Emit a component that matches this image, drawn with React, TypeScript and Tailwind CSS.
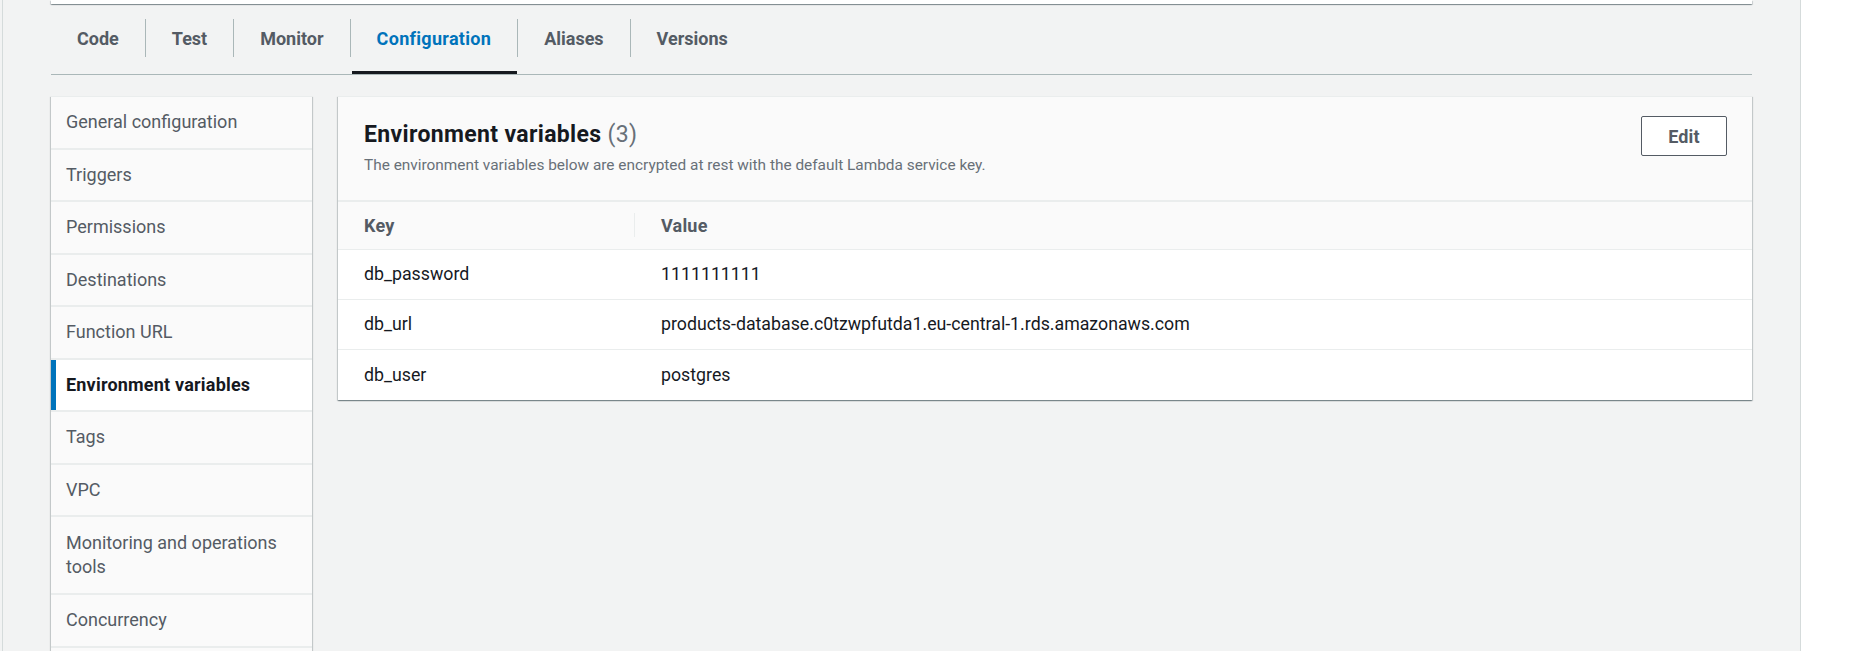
import React from 'react';

const tabs = ['Code', 'Test', 'Monitor', 'Configuration', 'Aliases', 'Versions'];

const navItems = [
  'General configuration',
  'Triggers',
  'Permissions',
  'Destinations',
  'Function URL',
  'Environment variables',
  'Tags',
  'VPC',
  'Monitoring and operations tools',
  'Concurrency',
];

const envVars = [
  { key: 'db_password', value: '1111111111' },
  { key: 'db_url', value: 'products-database.c0tzwpfutda1.eu-central-1.rds.amazonaws.com' },
  { key: 'db_user', value: 'postgres' },
];

const cardShadow =
  'shadow-[0_1px_1px_0_rgba(0,28,36,0.3),1px_1px_1px_0_rgba(0,28,36,0.15),-1px_1px_1px_0_rgba(0,28,36,0.15)]';

const Tabs: React.FC<{ active: string }> = ({ active }) => (
  <div className="flex border-b border-[#aab7b8]">
    {tabs.map((tab, index) => {
      const isActive = tab === active;
      return (
        <div key={tab} className="flex flex-col pt-[15px]">
          <div
            className={`h-[38px] flex items-center px-[26px] text-[18px] font-bold ${
              index > 0 ? 'border-l border-[#aab7b8]' : ''
            } ${isActive ? 'text-[#0073bb] tracking-[0.3px]' : 'text-[#545b64]'}`}
          >
            {tab}
          </div>
          <div className="h-[14px]" />
          <div className={`h-[3px] ${isActive ? 'bg-[#16191f] ml-[2px]' : ''}`} />
        </div>
      );
    })}
  </div>
);

const SideNav: React.FC<{ active: string }> = ({ active }) => (
  <div className={`w-[261px] shrink-0 bg-[#fafafa] border-t border-[#eaeded] ${cardShadow}`}>
    {navItems.map((item) => {
      const isActive = item === active;
      const tall = item.length > 25;
      return (
        <div
          key={item}
          className={`relative border-b-2 border-[#eaeded] pl-[15px] pr-[14px] text-[18px] leading-[24px] ${
            tall ? 'py-[14px]' : 'py-[13.25px]'
          } ${isActive ? 'bg-white font-bold tracking-[0.2px] text-[#16191f]' : 'text-[#545b64]'}`}
        >
          {isActive && <div className="absolute left-0 top-0 bottom-0 w-[5px] bg-[#0073bb]" />}
          {item}
        </div>
      );
    })}
    <div className="h-[20px]" />
  </div>
);

const EnvVarsPanel: React.FC = () => (
  <div className={`flex-1 bg-white border-t border-[#eaeded] ${cardShadow}`}>
    {/* header */}
    <div className="flex justify-between bg-[#fafafa] pt-[19px] pb-[25px] pl-[26px] pr-[25px] border-b-2 border-[#eaeded]">
      <div className="pt-[5px]">
        <h2 className="text-[23px] leading-[27.5px] tracking-[0.35px] font-bold text-[#16191f]">
          Environment variables <span className="font-normal text-[#687078]">(3)</span>
        </h2>
        <p className="mt-[6px] text-[15.4px] leading-[20px] text-[#687078]">
          The environment variables below are encrypted at rest with the default Lambda service key.
        </p>
      </div>
      <button className="h-[40px] w-[86px] rounded-[2px] border border-[#545b64] bg-white text-[18px] tracking-[0.2px] font-bold text-[#545b64]">
        Edit
      </button>
    </div>

    {/* table */}
    <div className="flex h-[48px] items-center bg-[#fafafa] border-b border-[#eaeded] text-[18px] tracking-[0.2px] font-bold text-[#545b64]">
      <div className="w-[296px] pl-[26px]">Key</div>
      <div className="h-[24px] flex items-center border-l border-[#eaeded] pl-[26px]">Value</div>
    </div>
    {envVars.map((row, index) => (
      <div
        key={row.key}
        className={`flex h-[50px] items-center text-[17.75px] text-[#16191f] ${
          index < envVars.length - 1 ? 'border-b border-[#eaeded]' : ''
        }`}
      >
        <div className="w-[296px] pl-[26px] pt-[1px]">{row.key}</div>
        <div className="pl-[27px] pt-[1px]">{row.value}</div>
      </div>
    ))}
  </div>
);

export default function App() {
  return (
    <div className="w-[1852px] h-[651px] overflow-hidden flex bg-white font-['Roboto',sans-serif]">
      <div className="w-[2px] shrink-0 bg-[#f2f3f3]" />
      <div className="w-[1799px] shrink-0 h-full bg-[#f2f3f3] border-l border-r border-[#d5dbdb] px-[48px]">
        {/* bottom of the card above */}
        <div className={`h-[4px] bg-white ${cardShadow}`} />

        <Tabs active="Configuration" />

        <div className="mt-[21px] flex items-start gap-[26px]">
          <SideNav active="Environment variables" />
          <EnvVarsPanel />
        </div>
      </div>
    </div>
  );
}
